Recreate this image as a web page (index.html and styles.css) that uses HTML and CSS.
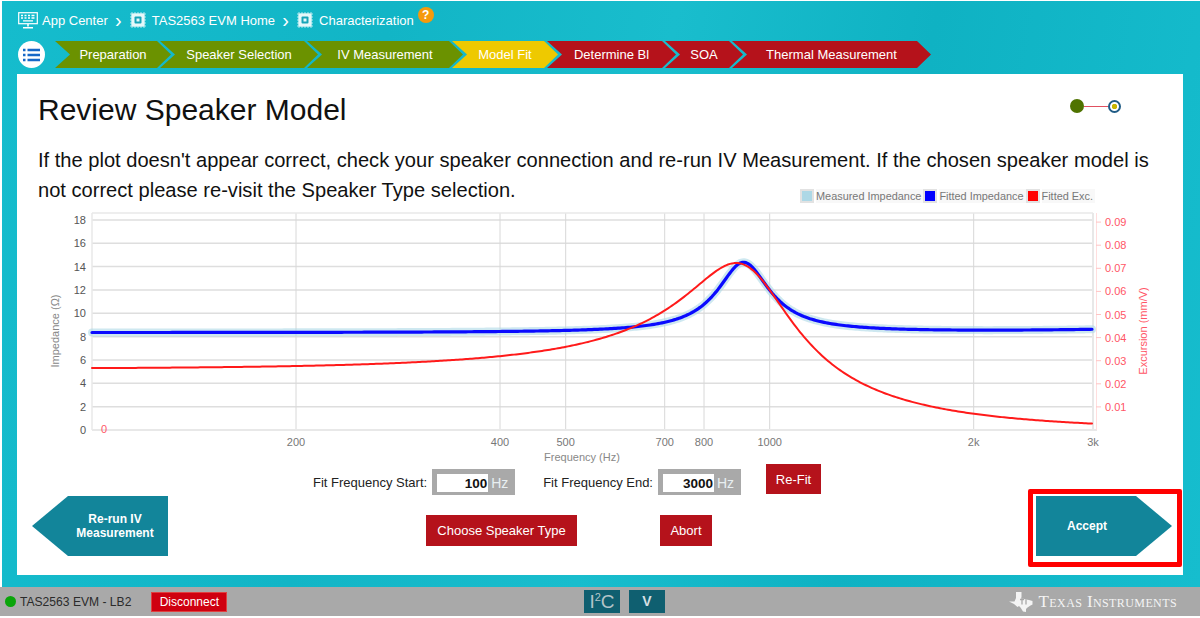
FILE: index.html
```html
<!DOCTYPE html>
<html lang="en">
<head>
    <meta charset="UTF-8">
    <meta name="viewport" content="width=device-width, initial-scale=1.0">
    <title>Review Speaker Model</title>
    <link rel="stylesheet" href="styles.css">
</head>
<body>
    <svg class="icon-defs" width="0" height="0">
        <symbol id="chip" viewBox="0 0 18 18">
            <path d="M3 1v16M6 1v16M9 1v16M12 1v16M15 1v16M1 3h16M1 6h16M1 9h16M1 12h16M1 15h16" stroke="#d8f4f7" stroke-width="0.8"/>
            <rect x="2.5" y="2.5" width="13" height="13" rx="1.5" fill="#e6f8fa"/>
            <rect x="5.5" y="5.5" width="7" height="7" rx="1" fill="#17a5b8"/>
            <rect x="7.5" y="7.5" width="3" height="3" fill="#e6f8fa"/>
        </symbol>
    </svg>

    <div class="app">
        <nav class="crumbs">
            <svg class="crumb-icon monitor" width="20" height="17" viewBox="0 0 20 17">
                <rect x="0.7" y="0.7" width="18.6" height="11" fill="none" stroke="#fff" stroke-width="1.2"/>
                <path d="M3 3.500h2M6.500 3.500h2M10 3.500h2M13.500 3.500h3M3 6h2M6.500 6h2M10 6h2M13.500 6h3M5 8.800h10" stroke="#fff" stroke-width="1.3"/>
                <path d="M10 12v2.500M5 15.800h10" stroke="#fff" stroke-width="1.6"/>
            </svg>
            <span class="crumb">App Center</span>
            <span class="crumb-sep">&#8250;</span>
            <svg class="crumb-icon" width="18" height="18"><use href="#chip"/></svg>
            <span class="crumb">TAS2563 EVM Home</span>
            <span class="crumb-sep">&#8250;</span>
            <svg class="crumb-icon" width="18" height="18"><use href="#chip"/></svg>
            <span class="crumb">Characterization</span>
            <span class="help">?</span>
        </nav>

        <div class="steps-bar">
            <button class="menu-button" aria-label="Menu">
                <svg width="17" height="14" viewBox="0 0 17 14">
                    <path d="M0 2h2.500M4.500 2H17M0 7h2.500M4.500 7H17M0 12h2.500M4.500 12H17" stroke="#1668c7" stroke-width="2.6"/>
                </svg>
            </button>
            <div class="steps">
                <div class="step done step-prep">Preparation</div>
                <div class="step done step-speaker">Speaker Selection</div>
                <div class="step done step-iv">IV Measurement</div>
                <div class="step current step-fit">Model Fit</div>
                <div class="step todo step-bl">Determine Bl</div>
                <div class="step todo step-soa">SOA</div>
                <div class="step todo step-thermal">Thermal Measurement</div>
            </div>
        </div>

        <main class="panel">
            <div class="panel-head">
                <h1 class="panel-title">Review Speaker Model</h1>
                <div class="progress">
                    <span class="progress-done"></span>
                    <span class="progress-line"></span>
                    <span class="progress-now"></span>
                </div>
            </div>
            <div class="panel-text">
                <p>If the plot doesn't appear correct, check your speaker connection and re-run IV Measurement. If the chosen speaker model is</p>
                <p class="panel-text-short">not correct please re-visit the Speaker Type selection.</p>
            </div>

            <div class="legend">
                <span class="legend-swatch swatch-measured"></span><span class="legend-label">Measured Impedance</span>
                <span class="legend-swatch swatch-fitted"></span><span class="legend-label">Fitted Impedance</span>
                <span class="legend-swatch swatch-exc"></span><span class="legend-label">Fitted Exc.</span>
            </div>
            <svg id="chart" class="chart" viewBox="17 205 1166 261" width="1166" height="261"></svg>

            <div class="controls">
                <button class="arrow arrow-back">Re-run IV<br>Measurement</button>
                <div class="center-controls">
                    <div class="fit-row">
                        <label class="fit-label">Fit Frequency Start:</label>
                        <div class="fit-box"><span class="fit-value">100</span><span class="fit-unit">Hz</span></div>
                        <label class="fit-label fit-label-end">Fit Frequency End:</label>
                        <div class="fit-box"><span class="fit-value">3000</span><span class="fit-unit">Hz</span></div>
                        <button class="red-button refit">Re-Fit</button>
                    </div>
                    <div class="button-row">
                        <button class="red-button">Choose Speaker Type</button>
                        <button class="red-button">Abort</button>
                    </div>
                </div>
                <div class="accept-outline">
                    <button class="arrow arrow-next">Accept</button>
                </div>
            </div>
        </main>
    </div>

    <footer class="status-bar">
        <div class="status-left">
            <span class="status-dot"></span>
            <span class="status-name">TAS2563 EVM - LB2</span>
            <button class="disconnect">Disconnect</button>
        </div>
        <div class="status-center">
            <span class="bus bus-i2c">I<sup>2</sup>C</span>
            <span class="bus bus-v">V</span>
        </div>
        <div class="ti-brand">
            <svg width="24" height="20" viewBox="0 0 24 20">
                <path d="M7 0h5.500v6l2.500 1 2 .5 3 .5 3.500 1v3.500l-2 1-3 2-1.500 1.500V20l-3-.5-2.500-4-1.500-1.500-1.500 1-3.500-3L0 9.500h5.500L7 6z" fill="#f4f4f4"/>
                <path d="M11 7.500h4M13 5.500v7M17 7.500v5" stroke="#a9a9a9" stroke-width="1.300" fill="none"/>
            </svg>
            <span class="ti-name">Texas Instruments</span>
        </div>
    </footer>

    <script src="chart.js"></script>
</body>
</html>
```

FILE: styles.css
```css
* {
    margin: 0;
    padding: 0;
    box-sizing: border-box;
    font-family: 'Liberation Sans', Arial, sans-serif;
}

:root {
    --arrow-color: #12859a;
    --red-color: #b5121b;
    --green-color: #6b9200;
    --yellow-color: #eec900;
}

html, body {
    width: 1200px;
    height: 618px;
    overflow: hidden;
    background: #fff;
}

body {
    padding: 1px 0 0 2px;
}

.icon-defs {
    position: absolute;
}

.app {
    height: 586px;
    padding: 0 15px;
    background: linear-gradient(100deg, #15bccd 0%, #12b5c6 30%, #19bdcd 52%, #0fb2c3 72%, #16bdce 100%);
    display: flex;
    flex-direction: column;
}

/* breadcrumb */
.crumbs {
    height: 38px;
    padding-left: 1px;
    display: flex;
    align-items: center;
    color: #fff;
    font-size: 13px;
}

.crumb-icon {
    flex: none;
}

.monitor {
    margin-right: 4px;
}

.crumb {
    margin-left: 5px;
}

.monitor + .crumb {
    margin-left: 0;
}

.crumb-sep {
    width: 21px;
    text-align: center;
    font-size: 20px;
    line-height: 20px;
}

.help {
    width: 16px;
    height: 16px;
    margin: -10px 0 0 4px;
    border-radius: 50%;
    background: #f59a0c;
    color: #fff;
    font-size: 12px;
    font-weight: 700;
    line-height: 16px;
    text-align: center;
}

/* step bar */
.steps-bar {
    height: 27px;
    margin-top: 2px;
    display: flex;
    align-items: center;
}

.menu-button {
    width: 27px;
    height: 27px;
    margin-left: 1px;
    border: none;
    border-radius: 50%;
    background: #fff;
    display: flex;
    align-items: center;
    justify-content: center;
}

.steps {
    display: flex;
    margin-left: 10px;
}

.step {
    height: 27px;
    margin-left: -11px;
    display: flex;
    align-items: center;
    justify-content: center;
    color: #fff;
    font-size: 13px;
    clip-path: polygon(0 0, calc(100% - 14px) 0, 100% 50%, calc(100% - 14px) 100%, 0 100%, 15px 50%);
}

.step:first-child {
    margin-left: 0;
}

.done {
    background: var(--green-color);
}

.current {
    background: var(--yellow-color);
}

.todo {
    background: var(--red-color);
}

.step-prep { width: 116px; }
.step-speaker { width: 158px; }
.step-iv { width: 156px; }
.step-fit { width: 106px; }
.step-bl { width: 129px; }
.step-soa { width: 78px; }
.step-thermal { width: 199px; }

/* main panel */
.panel {
    width: 1166px;
    height: 501px;
    margin-top: 6px;
    background: #fff;
    color: #111;
}

.panel-head {
    height: 71px;
    padding: 19px 62px 0 21px;
    display: flex;
    justify-content: space-between;
}

.panel-title {
    font-size: 30px;
    font-weight: 400;
    line-height: 34px;
}

.progress {
    height: 26px;
    display: flex;
    align-items: center;
}

.progress-done {
    width: 14px;
    height: 14px;
    border-radius: 50%;
    background: #4f7300;
}

.progress-line {
    width: 24px;
    height: 1px;
    background: #e05060;
}

.progress-now {
    width: 13px;
    height: 13px;
    border: 2px solid #1f5b85;
    border-radius: 50%;
    background: radial-gradient(circle, #c8b400 0 2.5px, #fff 3px);
}

/* second line runs beside the legend, so the block stops short of it */
.panel-text {
    height: 43px;
    padding: 0 21px;
    font-size: 20.1px;
    line-height: 30px;
}

.panel-text-short {
    width: 500px;
}

.legend {
    height: 15px;
    margin: 0 88px 2px 0;
    display: flex;
    justify-content: flex-end;
    align-items: center;
    color: #777;
    font-size: 10.9px;
}

.legend-swatch {
    width: 14px;
    height: 14px;
    margin-right: 2px;
    border: 2px solid #e2e2e2;
}

.legend-label {
    padding-right: 2px;
    background: #f8f8f8;
    line-height: 14px;
}

.swatch-measured { background: #add8e6; }
.swatch-fitted { background: #0000ff; }
.swatch-exc { background: #ff0000; }

.chart {
    display: block;
}

.chart text {
    font-size: 11px;
}

.tick-left { fill: #555; text-anchor: end; }
.tick-right { fill: #ff5566; }
.tick-bottom { fill: #777; text-anchor: middle; }
.axis-title { fill: #888; text-anchor: middle; }
.axis-title-right { fill: #ff5566; text-anchor: middle; }

/* bottom controls */
.controls {
    height: 109px;
    padding-left: 15px;
    display: flex;
    align-items: flex-end;
}

.arrow {
    width: 136px;
    height: 60px;
    border: none;
    background: var(--arrow-color);
    color: #fff;
    font-size: 12px;
    font-weight: 700;
    line-height: 14px;
    flex: none;
}

.arrow-back {
    margin-bottom: 19px;
    padding-left: 30px;
    clip-path: polygon(36px 0, 100% 0, 100% 100%, 36px 100%, 0 50%);
}

.arrow-next {
    padding-right: 34px;
    clip-path: polygon(0 0, calc(100% - 36px) 0, 100% 50%, calc(100% - 36px) 100%, 0 100%);
}

.center-controls {
    height: 100%;
    padding-left: 145px;
    flex: 1;
}

.fit-row {
    height: 32px;
    display: flex;
    align-items: flex-start;
    color: #222;
    font-size: 13px;
}

.fit-label {
    margin-top: 9px;
    line-height: 16px;
}

.fit-label-end {
    margin-left: 28px;
}

.fit-box {
    width: 83px;
    height: 26px;
    margin: 3px 0 0 5px;
    padding: 5px 0 0 5px;
    background: #a9a9a9;
    display: flex;
    align-items: flex-start;
}

.fit-value {
    width: 51px;
    height: 18px;
    padding-right: 1px;
    background: #fff;
    color: #111;
    font-size: 13.5px;
    font-weight: 700;
    line-height: 19px;
    text-align: right;
}

.fit-unit {
    margin-left: 3px;
    color: #e8eff1;
    font-size: 14px;
    line-height: 18px;
}

.red-button {
    height: 31px;
    border: none;
    background: var(--red-color);
    color: #fff;
    font-size: 13px;
}

.refit {
    width: 55px;
    height: 30px;
    margin: -2px 0 0 25px;
}

.button-row {
    margin: 17px 0 0 113px;
    display: flex;
    gap: 83px;
}

.button-row .red-button:first-child {
    width: 151px;
}

.button-row .red-button:last-child {
    width: 52px;
}

.accept-outline {
    width: 154px;
    height: 78px;
    margin: 0 1px 8px 0;
    padding: 2px 5px 6px 3px;
    border: 5px solid #ff0000;
    border-radius: 2px;
    flex: none;
}

/* status bar */
.status-bar {
    height: 29px;
    margin-left: -2px;
    padding: 0 23px 0 5px;
    background: #a9a9a9;
    display: flex;
    align-items: center;
}

.status-left {
    width: 579px;
    display: flex;
    align-items: center;
    color: #2b2b2b;
    font-size: 12.1px;
}

.status-dot {
    width: 11px;
    height: 11px;
    margin-right: 4px;
    border-radius: 50%;
    background: #0aa50a;
}

.disconnect {
    width: 76px;
    height: 20px;
    margin-left: 20px;
    border: 1px solid #e04040;
    background: #cf0010;
    color: #fff;
    font-size: 12px;
}

.status-center {
    display: flex;
    gap: 9px;
}

.bus {
    width: 36px;
    height: 23px;
    background: #0f5f70;
    color: #b5c4c8;
    text-align: center;
}

.bus-i2c {
    font-size: 19px;
    line-height: 24px;
}

.bus-i2c sup {
    font-size: 11px;
    line-height: 0;
}

.bus-v {
    color: #d5dfe2;
    font-size: 14px;
    font-weight: 700;
    line-height: 22px;
}

.ti-brand {
    margin-left: auto;
    display: flex;
    align-items: center;
    gap: 6px;
    color: #f4f4f4;
}

.ti-name {
    font-family: 'Liberation Serif', serif;
    font-variant: small-caps;
    font-size: 17px;
    letter-spacing: 0.4px;
}
```

FILE: chart.js
```js
const svgNS = 'http://www.w3.org/2000/svg';
const chart = document.getElementById('chart');

const plot = { left: 92, right: 1093, top: 213, bottom: 430 };
const freqX = f => plot.left + 204 * Math.log2(f / 100);

function add(tag, attrs, text) {
    const el = document.createElementNS(svgNS, tag);
    Object.keys(attrs).forEach(key => el.setAttribute(key, attrs[key]));
    if (text !== undefined) el.textContent = text;
    chart.appendChild(el);
    return el;
}

function line(x1, y1, x2, y2, stroke, width) {
    add('line', { x1, y1, x2, y2, stroke, 'stroke-width': width });
}

// grid
for (let z = 0; z <= 18; z += 2) {
    const y = 430 - z * 11.67;
    line(plot.left, y, plot.right, y, '#dedede', 1.5);
    add('text', { x: 86, y: y + 4, class: 'tick-left' }, z);
}

const freqTicks = [[200, '200'], [400, '400'], [500, '500'], [700, '700'], [800, '800'], [1000, '1000'], [2000, '2k'], [3000, '3k']];
freqTicks.forEach(([f, label]) => {
    const x = freqX(f);
    line(x, plot.top, x, plot.bottom, '#d8d8d8', 1);
    add('text', { x, y: 446, class: 'tick-bottom' }, label);
});

// plot border
line(plot.left, plot.top, plot.right, plot.top, '#e8e8e8', 1.5);
line(plot.left, plot.top, plot.left, plot.bottom, '#e8e8e8', 1.5);
line(plot.left, plot.bottom, plot.right + 4, plot.bottom, '#e8e8e8', 2);
line(plot.right, plot.top, plot.right, plot.bottom, '#e8e8e8', 2);

// right axis
line(1096.5, plot.top, 1096.5, plot.bottom, '#ffdede', 1);
for (let i = 1; i <= 9; i++) {
    const y = 430 - i * 23.1;
    line(1096, y, 1101, y, '#ffc4c4', 1);
    add('text', { x: 1105, y: y + 4, class: 'tick-right' }, '0.0' + i);
}
add('text', { x: 101, y: 433, class: 'tick-right' }, '0');

// axis titles
add('text', { x: 582, y: 461, class: 'axis-title' }, 'Frequency (Hz)');
add('text', { x: 59, y: 331, class: 'axis-title', transform: 'rotate(-90 59 331)' }, 'Impedance (\u03a9)');
add('text', { x: 1147, y: 331, class: 'axis-title-right', transform: 'rotate(-90 1147 331)' }, 'Excursion (mm/V)');

// speaker model: resonance around 915 Hz
function impedanceAt(f) {
    const r = f / 915;
    const qx = 5.2 * (r - 1 / r);
    const denom = 1 + qx * qx;
    const re = 8.35 + 6 / denom + 0.25 * Math.pow(f / 3000, 2);
    const im = 6 * qx / denom;
    return Math.hypot(re, im);
}

function excursionAt(f) {
    const r = f / 925;
    return 0.0265 / Math.hypot(1 - r * r, r / 2.68);
}

function curve(valueToY) {
    let d = '';
    for (let x = plot.left; x <= plot.right - 1; x += 2) {
        const f = 100 * Math.pow(2, (x - plot.left) / 204);
        d += `${d ? 'L' : 'M'}${x} ${valueToY(f).toFixed(2)} `;
    }
    return d;
}

const impedancePath = curve(f => 430 - impedanceAt(f) * 11.67);
const excursionPath = curve(f => 430 - excursionAt(f) * 2310);

const style = { fill: 'none', 'stroke-linejoin': 'round', 'stroke-linecap': 'round' };
add('path', { ...style, d: impedancePath, stroke: '#add8e6', 'stroke-width': 8, opacity: 0.6 });
add('path', { ...style, d: impedancePath, stroke: '#0a0aff', 'stroke-width': 3.2 });
add('path', { ...style, d: excursionPath, stroke: '#ff1a1a', 'stroke-width': 2 });
```
